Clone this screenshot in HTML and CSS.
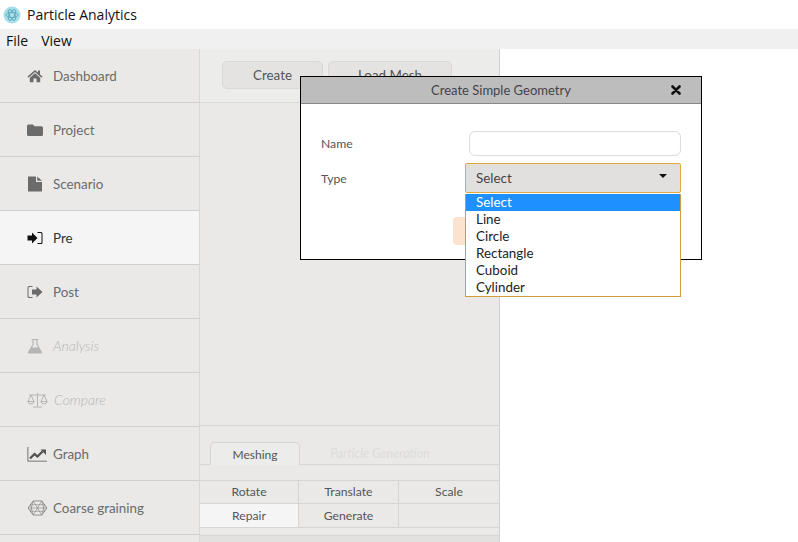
FILE: index.html
```html
<!DOCTYPE html>
<html lang="en">
<head>
    <meta charset="UTF-8">
    <title>Particle Analytics</title>
    <link rel="stylesheet" href="styles.css">
</head>
<body>
    <div class="titlebar">
        <svg class="app-logo" viewBox="0 0 18 18">
            <circle cx="9" cy="9" r="8.5" fill="#a5dfe9"/>
            <g fill="none" stroke="#5a9fb5" stroke-width="0.8">
                <ellipse cx="9" cy="9" rx="6" ry="2.6"/>
                <ellipse cx="9" cy="9" rx="6" ry="2.6" transform="rotate(60 9 9)"/>
                <ellipse cx="9" cy="9" rx="6" ry="2.6" transform="rotate(120 9 9)"/>
            </g>
        </svg>
        <span>Particle Analytics</span>
    </div>
    <div class="menubar">
        <span>File</span>
        <span>View</span>
    </div>

    <div class="main">
        <div class="sidebar">
            <div class="nav-item">
                <svg class="nav-icon" viewBox="0 0 16 16"><path d="M8 2 L0.5 8.6 L1.5 9.7 L8 4 L14.5 9.7 L15.5 8.6 L13 6.4 V2.5 H11 V4.6 Z M8 5.2 L2.8 9.8 V14.2 H6.5 V10.5 H9.5 V14.2 H13.2 V9.8 Z"/></svg>
                <span>Dashboard</span>
            </div>
            <div class="nav-item">
                <svg class="nav-icon" viewBox="0 0 16 16"><path d="M1.5 2.5 H6 L7.5 4.2 H14.5 Q16 4.2 16 5.7 V12.5 Q16 14 14.5 14 H1.5 Q0 14 0 12.5 V4 Q0 2.5 1.5 2.5 Z"/></svg>
                <span>Project</span>
            </div>
            <div class="nav-item">
                <svg class="nav-icon" viewBox="0 0 16 16"><path d="M1 0.5 H9 V6 H15 V15.5 H1 Z M10.2 0.5 L15 4.8 H10.2 Z"/></svg>
                <span>Scenario</span>
            </div>
            <div class="nav-item nav-active">
                <svg class="nav-icon" viewBox="0 0 16 16"><path d="M0.5 5.5 H5 V2.5 L10.5 8 L5 13.5 V10.5 H0.5 Z M10.5 2 H14 Q15.5 2 15.5 3.5 V12.5 Q15.5 14 14 14 H10.5 V13 H13.8 Q14.5 13 14.5 12.2 V3.8 Q14.5 3 13.8 3 H10.5 Z"/></svg>
                <span>Pre</span>
            </div>
            <div class="nav-item">
                <svg class="nav-icon" viewBox="0 0 16 16"><path d="M5.5 2 H2 Q0.5 2 0.5 3.5 V12.5 Q0.5 14 2 14 H5.5 V13 H2.5 Q1.5 13 1.5 12 V4 Q1.5 3 2.5 3 H5.5 Z M5 5.5 H9.5 V2.5 L15.5 8 L9.5 13.5 V10.5 H5 Z"/></svg>
                <span>Post</span>
            </div>
            <div class="nav-item nav-disabled">
                <svg class="nav-icon" viewBox="0 0 16 16"><path d="M4.5 1 H11.5 V2 H10.5 V6.2 L15 14 Q15.4 15.5 14 15.5 H2 Q0.6 15.5 1 14 L5.5 6.2 V2 H4.5 Z M6.6 2 V6.5 L5 9.5 H11 L9.4 6.5 V2 Z"/></svg>
                <span>Analysis</span>
            </div>
            <div class="nav-item nav-disabled">
                <svg class="nav-icon nav-icon-wide" viewBox="0 0 21 16">
                    <g fill="none" stroke="currentColor" stroke-width="1">
                        <path d="M10.5 1 V14.5 M6 15 H15 M2 3 H19 M4 3 L1 9.5 M4 3 L7 9.5 M17 3 L14 9.5 M17 3 L20 9.5"/>
                        <path d="M0.8 9.5 H7.2 Q6.5 12 4 12 Q1.5 12 0.8 9.5 Z M13.8 9.5 H20.2 Q19.5 12 17 12 Q14.5 12 13.8 9.5 Z"/>
                    </g>
                </svg>
                <span>Compare</span>
            </div>
            <div class="nav-item">
                <svg class="nav-icon nav-icon-wide nav-icon-dark" viewBox="0 0 21 16">
                    <path d="M0.5 1 H1.3 V14.7 H20 V15.5 H0.5 Z"/>
                    <path d="M3 12.5 L7.5 8 L10.5 10.5 L15.5 5.5" fill="none" stroke="currentColor" stroke-width="2.4"/>
                    <path d="M13.5 3.5 H19 V9 Z"/>
                </svg>
                <span>Graph</span>
            </div>
            <div class="nav-item">
                <svg class="nav-icon nav-icon-wide nav-icon-light" viewBox="0 0 21 17">
                    <g fill="none" stroke="currentColor" stroke-width="0.7">
                        <path d="M6 1 H15 L20.5 8.5 L15 16 H6 L0.5 8.5 Z" stroke-width="1"/>
                        <path d="M6 1 L15 16 M15 1 L6 16 M0.5 8.5 H20.5 M3 5 H18 M3 12 H18 M6 1 L3 12 M15 1 L18 12 M6 16 L3 5 M15 16 L18 5"/>
                    </g>
                </svg>
                <span>Coarse graining</span>
            </div>
        </div>

        <div class="panel">
            <div class="toolbar">
                <div class="tool-btn tool-create">Create</div>
                <div class="tool-btn tool-load">Load Mesh</div>
            </div>
            <div class="viewport"></div>
            <div class="tabs-area">
                <div class="tabs">
                    <div class="tab tab-active">Meshing</div>
                    <div class="tab tab-disabled">Particle Generation</div>
                </div>
                <div class="ops">
                    <div class="op">Rotate</div>
                    <div class="op">Translate</div>
                    <div class="op">Scale</div>
                    <div class="op op-active">Repair</div>
                    <div class="op">Generate</div>
                    <div class="op"></div>
                </div>
                <div class="panel-foot"></div>
            </div>
        </div>
    </div>

    <div class="modal">
        <div class="modal-head">
            <span>Create Simple Geometry</span>
            <svg class="modal-close" viewBox="0 0 10 10"><path d="M1.5 1.5 L8.5 8.5 M8.5 1.5 L1.5 8.5" stroke="#111" stroke-width="2.6" stroke-linecap="round"/></svg>
        </div>
        <div class="modal-body">
            <div class="form-row row-name">
                <label>Name</label>
                <div class="text-input"></div>
            </div>
            <div class="form-row row-type">
                <label>Type</label>
                <div class="select-box">
                    <span>Select</span>
                    <i class="caret"></i>
                </div>
            </div>
            <div class="modal-actions">
                <div class="save-btn"></div>
            </div>
        </div>
    </div>
    <ul class="dropdown">
        <li class="selected">Select</li>
        <li>Line</li>
        <li>Circle</li>
        <li>Rectangle</li>
        <li>Cuboid</li>
        <li>Cylinder</li>
    </ul>
</body>
</html>
```

FILE: styles.css
```css
html, body {
    margin: 0;
    height: 542px;
    overflow: hidden;
    background: white;
}
body {
    display: flex;
    flex-direction: column;
    font-family: Lato, sans-serif;
    font-size: 13.4px;
    color: #555;
}

/* window chrome */
.titlebar {
    height: 29px;
    display: flex;
    align-items: center;
    gap: 6px;
    padding-left: 3px;
    font-family: "Open Sans", sans-serif;
    font-size: 14px;
    color: #111;
}
.app-logo {
    width: 18px;
    height: 18px;
}
.menubar {
    height: 20px;
    background: #f0f0f0;
    display: flex;
    gap: 13px;
    padding-left: 6px;
    font-family: "Open Sans", sans-serif;
    font-size: 14px;
    line-height: 24px;
    color: #111;
    overflow: hidden;
}

.main {
    flex: 1;
    display: flex;
    min-height: 0;
}

/* sidebar */
.sidebar {
    width: 200px;
    box-sizing: border-box;
    flex-shrink: 0;
    background: #eae9e7;
    border-right: 1px solid #d8d8d8;
}
.nav-item {
    height: 53px;
    border-bottom: 1px solid #d0d0d0;
    display: flex;
    align-items: center;
    padding-left: 27px;
    color: #6b6b6b;
}
.nav-item span {
    margin-left: 10px;
}
.nav-icon {
    width: 16px;
    height: 16px;
    fill: currentColor;
    flex-shrink: 0;
}
.nav-icon-wide {
    width: 21px;
    margin-right: -5px;
}
.nav-icon-dark {
    color: #555;
}
.nav-icon-light {
    color: #8a8a8a;
}
.nav-active {
    background: #f5f5f5;
    color: #333;
}
.nav-active .nav-icon {
    color: #111;
}
.nav-disabled {
    color: #b5b5b5;
    font-size: 14px;
    font-style: italic;
    font-weight: 300;
}
.nav-disabled .nav-icon-wide + span {
    margin-left: 11px;
}

/* middle panel */
.panel {
    width: 300px;
    box-sizing: border-box;
    background: #eae9e7;
    border-right: 1px solid #d0d0d0;
    display: flex;
    flex-direction: column;
}
.toolbar {
    height: 54px;
    box-sizing: border-box;
    border-bottom: 1px solid #dcdcdc;
    background: #ececea;
    display: flex;
    gap: 5px;
    padding: 12px 0 0 22px;
}
.tool-btn {
    height: 26px;
    background: #e4e3e1;
    border: 1px solid #dad9d7;
    border-radius: 5px;
    text-align: center;
    line-height: 26px;
}
.tool-create {
    width: 99px;
}
.tool-load {
    width: 122px;
}
.viewport {
    flex: 1;
}
.tabs-area {
    height: 117px;
    box-sizing: border-box;
    border-top: 1px solid #d5d5d5;
    padding-top: 16px;
}
.tabs {
    height: 22px;
    border-bottom: 1px solid #d5d5d5;
    display: flex;
    padding-left: 10px;
    font-size: 12px;
}
.tab {
    width: 90px;
    box-sizing: border-box;
    height: 23px;
    text-align: center;
    line-height: 23px;
}
.tab-active {
    background: #ececea;
    border: 1px solid #d5d5d5;
    border-bottom: 0;
    border-radius: 5px 5px 0 0;
}
.tab-disabled {
    width: 124px;
    margin-left: 18px;
    font-size: 12.6px;
    color: #dcdcdc;
    font-style: italic;
    white-space: nowrap;
}
.ops {
    margin-top: 15px;
    border-top: 1px solid #d5d5d5;
    display: grid;
    grid-template-columns: 99px 100px 100px;
    grid-template-rows: 23px 24px;
    font-size: 12.2px;
}
.op {
    border-right: 1px solid #d5d5d5;
    border-bottom: 1px solid #d5d5d5;
    text-align: center;
    line-height: 22px;
}
.op:nth-child(n+4) {
    line-height: 24px;
}
.op:nth-child(3n) {
    border-right: 0;
}
.op-active {
    background: #f5f5f5;
}
.panel-foot {
    margin-top: 7px;
    height: 8px;
    background: #e2e1df;
    border-top: 1px solid #d5d5d5;
}

/* modal over the panel */
.modal {
    position: absolute;
    left: 300px;
    top: 76px;
    width: 402px;
    height: 184px;
    box-sizing: border-box;
    border: 1px solid #000;
    background: white;
    display: flex;
    flex-direction: column;
}
.modal-head {
    height: 27px;
    flex-shrink: 0;
    box-sizing: border-box;
    background: #bdbdbd;
    border-bottom: 1px solid #888;
    display: flex;
    align-items: center;
    justify-content: center;
    font-size: 13px;
    color: #444;
    position: relative;
}
.modal-close {
    position: absolute;
    right: 20px;
    top: 8px;
    width: 10px;
    height: 10px;
}
.modal-body {
    flex: 1;
    padding-top: 27px;
    font-size: 12.2px;
}
.form-row {
    display: flex;
    align-items: center;
    justify-content: space-between;
    padding: 0 20px;
}
.text-input {
    width: 212px;
    height: 25px;
    box-sizing: border-box;
    border: 1px solid #dcdcdc;
    border-radius: 6px;
}
.row-type {
    margin-top: 7px;
}
.select-box {
    width: 216px;
    height: 30px;
    box-sizing: border-box;
    background: #e2e0de;
    border: 1px solid #e0a840;
    border-radius: 2px;
    display: flex;
    align-items: center;
    justify-content: space-between;
    padding: 0 13px 0 10px;
    font-size: 13.4px;
    color: #444;
}
.caret {
    margin-bottom: 4px;
    border-left: 4px solid transparent;
    border-right: 4px solid transparent;
    border-top: 4px solid #111;
}
.modal-actions {
    margin-top: 24px;
    padding-left: 152px;
}
.save-btn {
    width: 40px;
    height: 28px;
    background: #fbe3d0;
    border-radius: 4px;
}

/* open select list, hangs out of the modal */
.dropdown {
    position: absolute;
    left: 465px;
    top: 194px;
    width: 216px;
    margin: 0;
    padding: 0;
    list-style: none;
    box-sizing: border-box;
    background: white;
    border: 1px solid #d09c3c;
    border-top: 0;
    font-size: 13.4px;
    color: #222;
}
.dropdown li {
    height: 17px;
    line-height: 16px;
    padding-left: 10px;
}
.dropdown .selected {
    background: #1e90ff;
    color: white;
}
```
